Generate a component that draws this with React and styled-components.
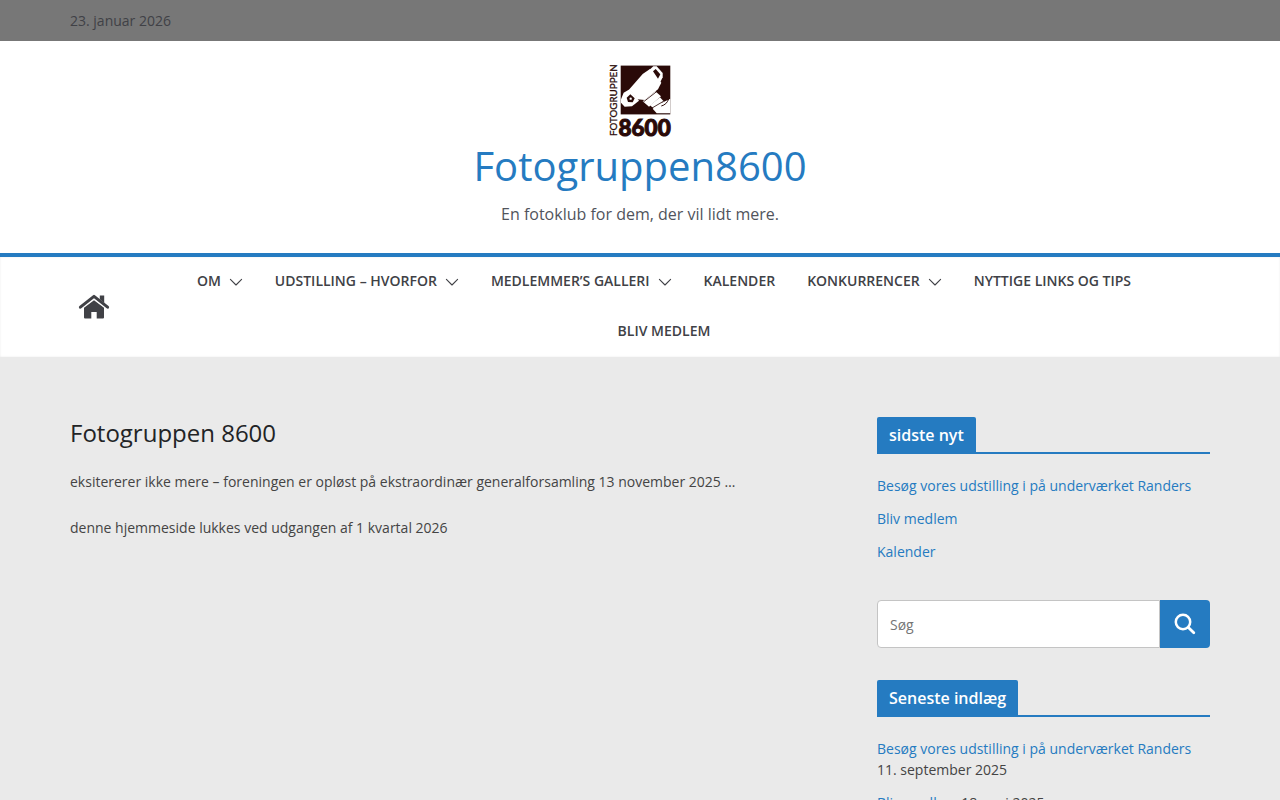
import styled, { createGlobalStyle } from "styled-components";
import { useState } from "react";

const menuItems = [
    { label: "Om", hasSub: true },
    { label: "Udstilling – hvorfor", hasSub: true },
    { label: "Medlemmer’s galleri", hasSub: true },
    { label: "Kalender" },
    { label: "Konkurrencer", hasSub: true },
    { label: "Nyttige links og tips" },
    { label: "Bliv medlem" },
]

const news = [
    "Besøg vores udstilling i på underværket Randers",
    "Bliv medlem",
    "Kalender",
]

const posts = [
    { title: "Besøg vores udstilling i på underværket Randers", date: "11. september 2025" },
    { title: "Bliv medlem", date: "18. maj 2025" },
]

function Logo() {
    return (
        <svg width="64" height="74" viewBox="0 0 64 74" role="img" aria-label="Fotogruppen8600">
            <rect x="12.7" y="0.6" width="49.6" height="48.8" fill="#2a0a08" />
            <g transform="translate(-8 -7) scale(0.3333)" fill="#fff">
                {/* camera body */}
                <path d="M88 94 L128 48 L150 33 L184 74 L174 94 L134 126 L112 124 Z" />
                {/* strap lugs */}
                <path d="M148 36 L160 25 L170 25 L188 45 L188 58 L178 78 Z" />
                <path d="M159 40 L167 33 L181 49 L174 62 Z" fill="#2a0a08" />
                <path d="M90 93 L71 104 L63 124 L63 134 L74 146 L96 145 L117 128 Z" />
                <path d="M80 119 L91 109 L104 121 L98 133 L84 132 Z" fill="#2a0a08" />
                <circle cx="92" cy="122" r="3.5" />
                {/* lens barrel */}
                <path d="M128 130 L166 100 L183 115 L147 146 Z" />
                <path d="M150 142 L180 118 L191 130 L163 153 Z" />
                <path d="M158 152 L178 138 L211 122 V166 H170 Z" />
                <path d="M130 132 L171 100 M153 152 L190 130" stroke="#2a0a08" strokeWidth="2.5" />
                <path d="M184 144 Q200 140 206 123" stroke="#2a0a08" strokeWidth="3" fill="none" />
            </g>
            <text transform="translate(8.5 71) rotate(-90)" fontSize="9.8" fontFamily="Lato, sans-serif" fill="#2a0a08" stroke="#2a0a08" strokeWidth="0.3">FOTOGRUPPEN</text>
            <text x="10.5" y="70.5" fontSize="22.5" fontWeight="900" fontFamily="Lato, sans-serif" fill="#2a0a08" stroke="#2a0a08">8600</text>
        </svg>
    )
}

function HomeIcon() {
    return (
        <svg width="32" height="26" viewBox="0 0 32 26" fill="#404146" aria-hidden="true">
            <path d="M21.8 1.5 H26.2 V9 L21.8 5.2 Z" />
            <path d="M2.4 13.2 L16 2.4 L29.6 13.2" fill="none" stroke="#404146" strokeWidth="3" strokeLinecap="round" strokeLinejoin="round" />
            <path d="M6 13.8 L16 6.3 L26 13.8 V23.6 Q26 24.6 25 24.6 H18.7 V18 H13.3 V24.6 H7 Q6 24.6 6 23.6 Z" />
        </svg>
    )
}

function App() {

    const [search, setSearch] = useState("")

    return (
        <>
            <GlobalStyle />
            <TopBar>
                <Container>23. januar 2026</Container>
            </TopBar>
            <Header>
                <LogoLink href="#"><Logo /></LogoLink>
                <SiteTitle><a href="#">Fotogruppen8600</a></SiteTitle>
                <Tagline>En fotoklub for dem, der vil lidt mere.</Tagline>
            </Header>
            <NavBar>
                <NavInner>
                    <HomeLink href="#" aria-label="Forside"><HomeIcon /></HomeLink>
                    <Menu>
                        {menuItems.map((item) => (
                            <MenuItem key={item.label}>
                                <a href="#">{item.label}</a>
                                {item.hasSub && (
                                    <SubToggle type="button" aria-label={"Vis " + item.label}>
                                        <svg width="14" height="8" viewBox="0 0 14 8" fill="none" stroke="#404146" strokeWidth="1.1">
                                            <path d="M1.4 1.4 L7 7 L12.6 1.4" strokeLinecap="round" strokeLinejoin="round" />
                                        </svg>
                                    </SubToggle>
                                )}
                            </MenuItem>
                        ))}
                    </Menu>
                </NavInner>
            </NavBar>
            <Content>
                <Article>
                    <h2>Fotogruppen 8600</h2>
                    <p>eksitererer ikke mere – foreningen er opløst på ekstraordinær generalforsamling 13 november 2025 …</p>
                    <p>denne hjemmeside lukkes ved udgangen af 1 kvartal 2026</p>
                </Article>
                <Sidebar>
                    <section>
                        <WidgetTitle><span>sidste nyt</span></WidgetTitle>
                        <WidgetList>
                            {news.map((title) => (
                                <li key={title}><a href="#">{title}</a></li>
                            ))}
                        </WidgetList>
                    </section>
                    <SearchForm onSubmit={(e) => e.preventDefault()}>
                        <input type="search" aria-label="Søg" placeholder="Søg" value={search} onChange={(e) => setSearch(e.target.value)} />
                        <button type="submit" aria-label="Søg nu">
                            <svg width="22" height="22" viewBox="0 0 22 22" fill="none" stroke="#fff" strokeLinecap="round">
                                <circle cx="9" cy="9" r="7.2" strokeWidth="2.5" />
                                <path d="M14.4 14.4 L19.8 19.8" strokeWidth="2.8" />
                            </svg>
                        </button>
                    </SearchForm>
                    <section>
                        <WidgetTitle><span>Seneste indlæg</span></WidgetTitle>
                        <WidgetList>
                            {posts.map((post) => (
                                <li key={post.title}><a href="#">{post.title}</a> <span>{post.date}</span></li>
                            ))}
                        </WidgetList>
                    </section>
                </Sidebar>
            </Content>
        </>
    )
}

export default App

const GlobalStyle = createGlobalStyle`
    * {
        box-sizing: border-box;
    }

    html {
        overflow-x: hidden;
        scrollbar-width: none;
    }

    body {
        background: #eaeaea;
        color: #444444;
        font-family: "Open Sans", sans-serif;
        font-size: 14px;
        line-height: 21px;
        margin: 0;
    }

    a {
        color: #257bc1;
        text-decoration: none;
    }
`

const Container = styled.div`
    margin: 0 auto;
    max-width: 1140px;
    width: 100%;
`

const TopBar = styled.div`
    background: #777777;
    color: #404146;
    padding: 10px 0;
`

const Header = styled.header`
    align-items: center;
    background: white;
    border-bottom: 4px solid #257bc1;
    display: flex;
    flex-direction: column;
    padding: 24px 0;
    text-align: center;
`

const LogoLink = styled.a`
    display: flex;
`

const SiteTitle = styled.h1`
    font-size: 40px;
    font-weight: 500;
    line-height: 54px;
    margin: 0;
`

const Tagline = styled.p`
    color: #51545c;
    font-size: 16px;
    line-height: 24px;
    margin: 9px 0 3px 0;
`

const NavBar = styled.nav`
    background: white;
    box-shadow: inset 0 0 2px rgba(0, 0, 0, 0.1);
`

const NavInner = styled(Container)`
    align-items: center;
    display: flex;
`

const HomeLink = styled.a`
    display: flex;
    flex-shrink: 0;
    padding: 0 8px;
`

const Menu = styled.ul`
    display: flex;
    flex: 1;
    flex-wrap: wrap;
    justify-content: center;
    list-style: none;
    margin: 0;
    padding: 0 16px;
`

const MenuItem = styled.li`
    align-items: center;
    display: flex;
    line-height: 22px;
    padding: 13px 16px 15px 16px;

    a{
        color: #404146;
        font-weight: 600;
        text-transform: uppercase;
    }
`

const SubToggle = styled.button`
    background: none;
    border: none;
    cursor: pointer;
    display: flex;
    padding: 2px 0 0 8px;
`

const Content = styled(Container)`
    display: grid;
    gap: 40px;
    grid-template-columns: minmax(0, 1fr) 333px;
    padding: 60px 0;
`

const Article = styled.main`

    h2{
        color: #222426;
        font-size: 24px;
        font-weight: 500;
        line-height: 32px;
        margin: 0 0 20px 0;
    }

    p{
        line-height: 26px;
        margin: 0 0 20px 0;
    }
`

const Sidebar = styled.aside`
    display: flex;
    flex-direction: column;
    gap: 32px;
`

const WidgetTitle = styled.h3`
    border-bottom: 2px solid #257bc1;
    display: flex;
    font-size: 16px;
    font-weight: 600;
    line-height: 24px;
    margin: 0 0 21px 0;

    span{
        background: #257bc1;
        border-radius: 2px 2px 0 0;
        color: white;
        padding: 6px 12px 5px 12px;
    }
`

const WidgetList = styled.ul`
    display: flex;
    flex-direction: column;
    gap: 12px;
    list-style: none;
    margin: 0;
    padding: 0 0 6px 0;
`

const SearchForm = styled.form`
    display: flex;

    input{
        background: white;
        border: 1px solid #c4c4c4;
        border-radius: 4px 0 0 4px;
        color: #444444;
        flex: 1;
        font-family: inherit;
        font-size: 14px;
        height: 48px;
        min-width: 0;
        outline: none;
        padding: 0 12px;
    }

    input::placeholder{
        color: #757575;
    }

    button{
        align-items: center;
        background: #257bc1;
        border: none;
        border-radius: 0 4px 4px 0;
        cursor: pointer;
        display: flex;
        justify-content: center;
        padding: 0;
        width: 50px;
    }
`
